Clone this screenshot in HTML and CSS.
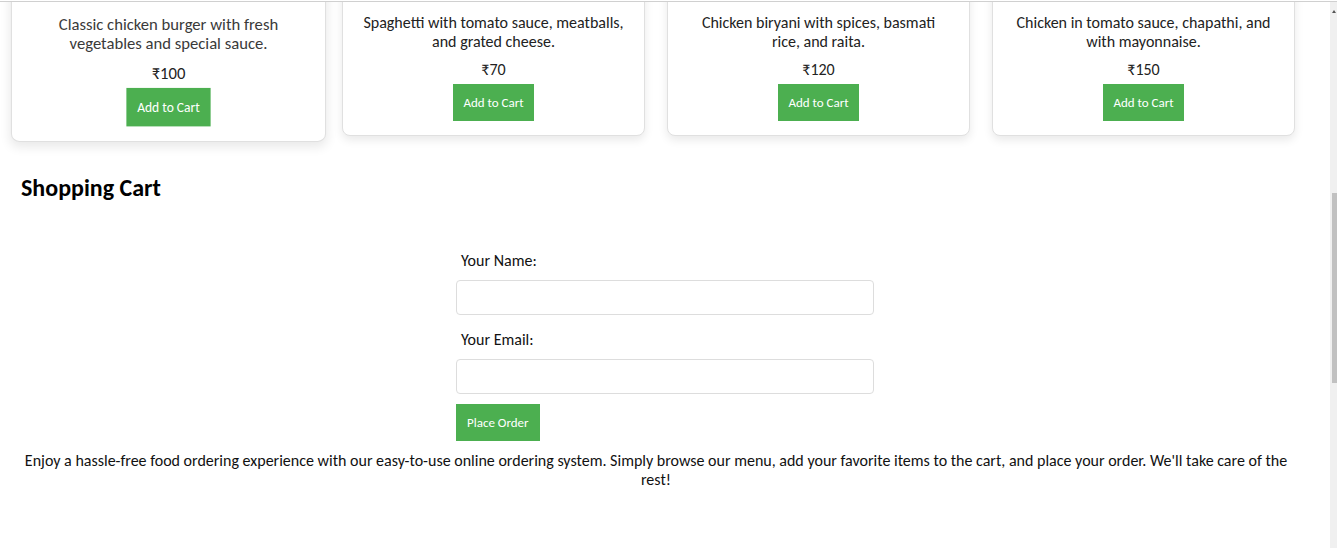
FILE: index.html
```html
<!DOCTYPE html>
<html lang="en">
<head>
<meta charset="utf-8">
<title>Food Ordering</title>
<link rel="stylesheet" href="styles.css">
</head>
<body>
<div class="topbar"></div>
<div class="viewport">
  <main class="page">
    <section class="menu">
      <div class="card card-hover">
        <div class="card-img"></div>
        <p class="card-desc">Classic chicken burger with fresh vegetables and special sauce.</p>
        <p class="card-price">₹100</p>
        <button class="btn">Add to Cart</button>
      </div>
      <div class="card">
        <div class="card-img"></div>
        <p class="card-desc">Spaghetti with tomato sauce, meatballs, and grated cheese.</p>
        <p class="card-price">₹70</p>
        <button class="btn">Add to Cart</button>
      </div>
      <div class="card">
        <div class="card-img"></div>
        <p class="card-desc">Chicken biryani with spices, basmati rice, and raita.</p>
        <p class="card-price">₹120</p>
        <button class="btn">Add to Cart</button>
      </div>
      <div class="card">
        <div class="card-img"></div>
        <p class="card-desc">Chicken in tomato sauce, chapathi, and with mayonnaise.</p>
        <p class="card-price">₹150</p>
        <button class="btn">Add to Cart</button>
      </div>
    </section>

    <section class="cart">
      <h2 class="cart-title">Shopping Cart</h2>
      <div class="cart-list"></div>
      <form class="order-form">
        <label class="field-label" for="name">Your Name:</label>
        <input class="field-input" type="text" id="name">
        <label class="field-label" for="email">Your Email:</label>
        <input class="field-input field-last" type="email" id="email">
        <button class="btn btn-order" type="button">Place Order</button>
      </form>
    </section>

    <p class="footer-text">Enjoy a hassle-free food ordering experience with our easy-to-use online ordering system. Simply browse our menu, add your favorite items to the cart, and place your order. We'll take care of the rest!</p>
  </main>
  <div class="scrollbar"><div class="scroll-arrow"></div><div class="scroll-thumb"></div></div>
</div>
</body>
</html>
```
FILE: styles.css
```css
* { box-sizing: border-box; }

html, body {
  margin: 0;
  padding: 0;
  height: 100%;
  overflow: hidden;
  background: #fff;
}

body {
  font-family: Carlito, Calibri, Lato, "Liberation Sans", sans-serif;
  font-size: 16px;
  color: #111;
}

.topbar {
  position: fixed;
  top: 0;
  left: 0;
  right: 0;
  height: 2px;
  background: #fff;
  border-bottom: 1px solid #d0d0d0;
  z-index: 10;
}

.viewport {
  display: flex;
  height: 548px;
}

.page {
  flex: 1;
  overflow: hidden;
}

.menu {
  display: grid;
  grid-template-columns: repeat(4, 303px);
  column-gap: 22px;
  align-items: start;
  padding: 0 0 0 17px;
  margin-top: -164px;
}

.card {
  background: #fff;
  border: 1px solid #e0e0e0;
  border-radius: 8px;
  box-shadow: 0 4px 10px rgba(0, 0, 0, 0.09);
  padding: 15px 20px 14px;
  text-align: center;
}

.card-hover {
  transform: scale(1.04);
}

.card-img {
  height: 140px;
  margin-bottom: 21px;
  background: #eee;
  border-radius: 6px;
}

.card-desc {
  margin: 0;
  line-height: 19px;
  color: #222;
}

.card-hover .card-desc {
  color: #3a3a3a;
}

.card-price {
  margin: 9px 0 0;
  line-height: 19px;
  color: #222;
}

.btn {
  display: inline-block;
  margin-top: 5px;
  height: 37px;
  padding: 0 10px;
  border: none;
  background: #4caf50;
  color: #fff;
  font-family: inherit;
  font-size: 13px;
  cursor: pointer;
}

.cart {
  padding: 0 21px;
}

.cart-title {
  margin: 37px 0 0;
  font-size: 24px;
  line-height: 29px;
  font-weight: bold;
  color: #000;
}

.cart-list {
  min-height: 49px;
}

.order-form {
  width: 418px;
  margin: 0 auto;
}

.field-label {
  display: block;
  line-height: 20px;
  margin: 0 0 9px 5px;
  color: #111;
}

.field-input {
  display: block;
  width: 100%;
  height: 35px;
  margin: 0 0 15px;
  border: 1px solid #ddd;
  border-radius: 4px;
  font-family: inherit;
  font-size: 16px;
  padding: 0 8px;
}

.field-last {
  margin-bottom: 10px;
}

.btn-order {
  margin-top: 0;
  padding: 0 11px;
}

.footer-text {
  margin: 10px 0 0;
  padding: 0 30px 0 12px;
  text-align: center;
  line-height: 19px;
}

.scrollbar {
  width: 7px;
  background: #f0f0f0;
  display: flex;
  flex-direction: column;
  align-items: flex-end;
}

.scroll-arrow {
  width: 0;
  height: 0;
  margin: 10px 1px 0 0;
  border-left: 2px solid transparent;
  border-right: 2px solid transparent;
  border-bottom: 3px solid #555;
}

.scroll-thumb {
  width: 5px;
  height: 190px;
  margin-top: 180px;
  background: #c1c1c1;
}
```
